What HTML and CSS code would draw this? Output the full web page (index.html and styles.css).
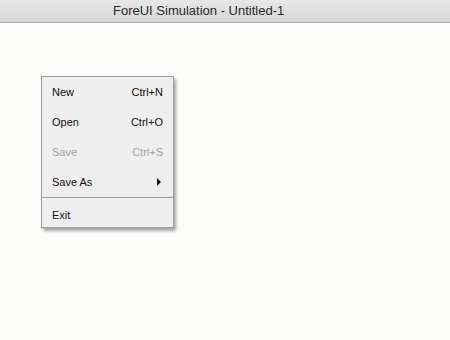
FILE: index.html
```html
<!DOCTYPE html>
<html lang="en">

<head>
    <meta charset="UTF-8" />
    <title>ForeUI Simulation - Untitled-1</title>
    <link rel="stylesheet" href="styles.css">
</head>

<body>

    <div class="titlebar">ForeUI Simulation - Untitled-1</div>

    <div class="canvas">
        <ul class="menu">
            <li class="item"><span>New</span><span>Ctrl+N</span></li>
            <li class="item"><span>Open</span><span>Ctrl+O</span></li>
            <li class="item disabled"><span>Save</span><span>Ctrl+S</span></li>
            <li class="item"><span>Save As</span><span class="arrow"></span></li>
            <li class="separator"></li>
            <li class="item short"><span>Exit</span></li>
        </ul>
    </div>

</body>

</html>
```

FILE: styles.css
```css
body {
    margin: 0;
    background: #fdfdfc;
    font-family: 'Liberation Sans', Arial, sans-serif;
    width: 450px;
    height: 340px;
    overflow: hidden;
}

.titlebar {
    height: 22px;
    line-height: 22px;
    padding-left: 113px;
    font-size: 13px;
    color: #2a2a2a;
    background: linear-gradient(#e8e8e8, #d6d6d6);
    border-bottom: 1px solid #a9a9a9;
}

.canvas {
    padding: 53px 0 0 41px;
}

.menu {
    list-style: none;
    margin: 0;
    padding: 0;
    width: 131px;
    background: #f0efef;
    border: 1px solid #9c9c9c;
    box-shadow: 2px 3px 3px rgba(0, 0, 0, 0.35);
}

.item {
    display: flex;
    justify-content: space-between;
    align-items: center;
    height: 30px;
    padding: 0 10px 0 10px;
    font-size: 11px;
    color: #111;
}

.item.short {
    height: 25px;
    padding-top: 4px;
}

.disabled {
    color: #a3a3a3;
}

.arrow {
    width: 0;
    height: 0;
    margin-right: 2px;
    border-top: 4px solid transparent;
    border-bottom: 4px solid transparent;
    border-left: 4px solid #111;
}

.separator {
    height: 0;
    border-top: 1px solid #9c9c9c;
    margin: 0;
}
```
